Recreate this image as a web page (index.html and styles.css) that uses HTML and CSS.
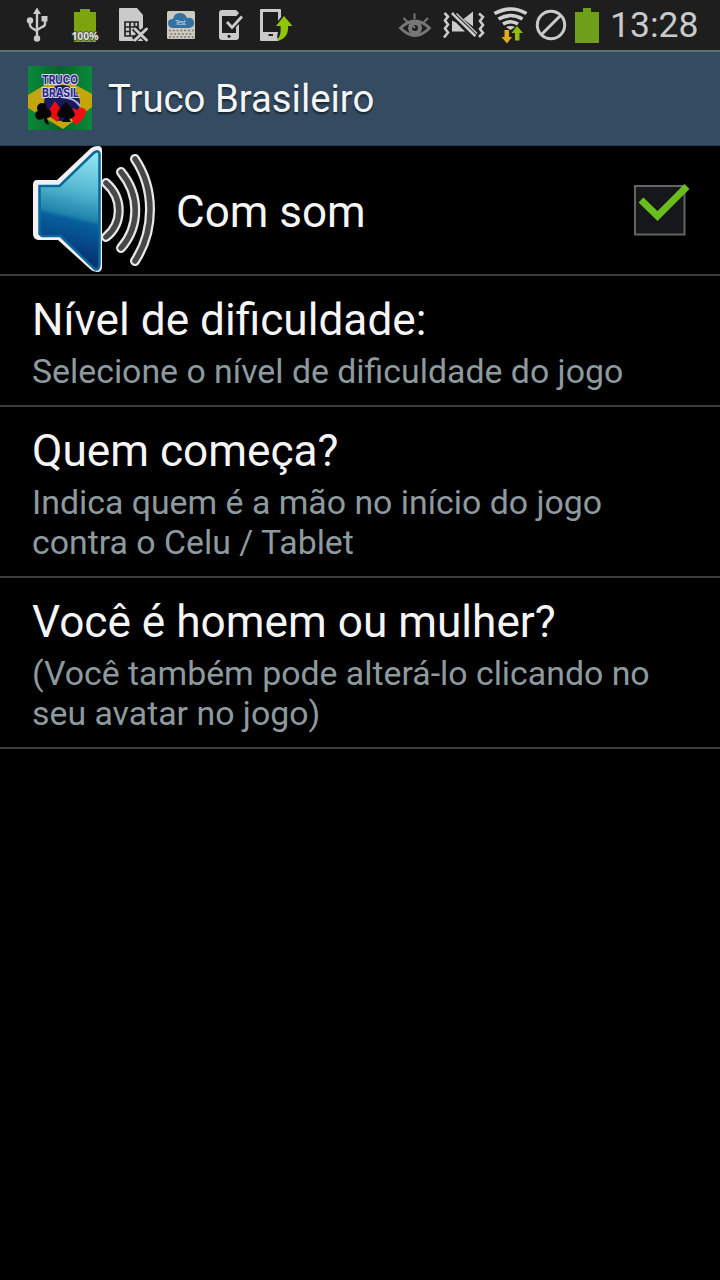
FILE: index.html
```html
<!DOCTYPE html>
<html lang="pt-BR">
<head>
<meta charset="utf-8">
<title>Truco Brasileiro</title>
<link rel="stylesheet" href="styles.css">
</head>
<body>
<div class="status">
  <div class="status-left">
    <svg class="slot" viewBox="13 0 48 50" fill="none" stroke="#cacaca" stroke-width="2.4">
      <path d="M37 38V13M30 20v5q0 2 2 3l5 3M45 18v6q0 2-3 3l-5 3"/>
      <path d="M37 7.500l4 6.500h-8z M41.500 16h6v5.500h-6z" fill="#cacaca" stroke="none"/>
      <circle cx="30" cy="20.500" r="3.200" fill="#cacaca" stroke="none"/><circle cx="37" cy="38.500" r="3.200" fill="#cacaca" stroke="none"/>
    </svg>
    <svg class="slot" viewBox="61 0 48 50">
      <path d="M80 9h10v3h6v30H74V12h6z" fill="#7ba40e"/>
      <text class="pct" x="71.500" y="40" textLength="27">100%</text>
    </svg>
    <svg class="slot" viewBox="109 0 48 50">
      <path d="M120 8h17l6 7v26h-23q-1 0-1-1V9q0-1 1-1z" fill="#cacaca"/>
      <path d="M125 22h13v14h-13zM125 27h5M125 31.500h5M130 22v14M134.500 22v5M130 27h8" fill="none" stroke="#262626" stroke-width="1.700"/>
      <path d="M134 28l13 12M147 28l-13 12" stroke="#1e1e1e" stroke-width="6"/>
      <path d="M135 29l11.500 11M146.500 29l-11.500 11" stroke="#cacaca" stroke-width="3" stroke-linecap="round"/>
    </svg>
    <svg class="slot" viewBox="157 0 48 50">
      <rect x="167" y="11" width="28" height="28" rx="1.500" fill="#cdcac2"/>
      <path d="M172 28q-4-1-4-5t5-4q1-6 7-6 5 0 7 5 6-1 7 4t-5 6z" fill="#34719f"/>
      <path d="M169 30.500h25M170.500 34h23M169 37h25" stroke="#74706a" stroke-width="1.600" stroke-dasharray="1.800 2"/>
      <text class="test" x="175" y="25" textLength="11">Test</text>
    </svg>
    <svg class="slot" viewBox="205 0 48 50">
      <path d="M222 10h14l3 3-2.500 3H222v17h14v-6l3-3v13q0 3-3 3h-14q-3 0-3-3V13q0-3 3-3z" fill="#cacaca"/>
      <circle cx="229" cy="36.300" r="1.500" fill="#1e1e1e"/>
      <path d="M227 22l5 5.500 10-11" fill="none" stroke="#cacaca" stroke-width="2.800"/>
    </svg>
    <svg class="slot" viewBox="253 0 48 50">
      <path fill-rule="evenodd" d="M261 9h19q1 0 1 1v7l-3 4v-9h-15v20h15l-1 5 2 4h-18q-1 0-1-1V10q0-1 1-1z" fill="#cacaca"/>
      <path d="M268.500 35h4.500" stroke="#222" stroke-width="2"/>
      <path d="M284 16l8.500 10H288q1 12-10.500 15-1-1 0-2 4-4 3-13h-4.500z" fill="#91c50b"/>
    </svg>
  </div>
  <div class="status-right">
    <svg class="slot" viewBox="391 0 48 50" fill="none" stroke="#777">
      <path d="M400.500 28q14.500-14 29 0-14.500 15-29 0z" stroke-width="2.800"/>
      <circle cx="415" cy="28" r="5" stroke-width="4"/><path d="M414.500 13.500v5.500M403.500 18l4 4M428 18l-4 4M415 28l-4-4" stroke-width="2"/>
    </svg>
    <svg class="slot" viewBox="439 0 48 50">
      <path d="M444.500 13l3.500 3.500-3 4 3 4-3 4 3 4-4 5M479 13.500l4 3.500-3 4 3 4-3 4 3 4-4 4" fill="none" stroke="#cacaca" stroke-width="2.600"/>
      <path d="M452 20.500v11h13l-9-9zM463.500 19l9.500-7.500v15z" fill="#cacaca"/>
      <path d="M452 13l23.500 23" stroke="#cacaca" stroke-width="3"/>
      <path d="M454.500 13l23 22" stroke="#1e1e1e" stroke-width="1.400"/>
      <path d="M456.500 13.500l20.500 20" stroke="#cacaca" stroke-width="1.500"/>
    </svg>
    <svg class="slot" viewBox="487 0 48 50">
      <g fill="none" stroke="#d0d0d0" stroke-width="3.700"><path d="M494.500 13.500q16.500-9 32 0M498.500 19q12-7 24 0M503 24q7.500-4.500 15 0"/></g>
      <path d="M506 27q4.500-2 9 0l-4.500 3z" fill="#d0d0d0"/>
      <path d="M504.500 30h4.500v7h3l-5 6.500-5.500-6.500h3z" fill="#e4ac14"/><path d="M517 26l6 7h-3.500v7.500H515v-7.500h-3.500z" fill="#91bd0c"/>
    </svg>
    <svg class="slot slot-no" viewBox="535 0 32 50" fill="none" stroke="#cacaca" stroke-width="3"><circle cx="551" cy="25" r="13.700"/><path d="M541.500 34.500l19-19"/></svg>
    <svg class="slot slot-battery" viewBox="567 0 40 50"><path d="M583 8h8v4h8v31h-24V12h8z" fill="#70a019"/></svg>
    <span class="clock">13:28</span>
  </div>
</div>
<header class="bar">
  <svg class="logo" viewBox="0 0 64 64">
    <defs><linearGradient id="green" x2="1"><stop stop-color="#098a39"/><stop offset=".5" stop-color="#07642c"/><stop offset="1" stop-color="#098a39"/></linearGradient></defs>
    <path d="M0 0h64v64H0z" fill="url(#green)"/>
    <path d="M0 29L20 17h24l20 11v13L35 63 0 42z" fill="#c4a60c"/>
    <circle cx="34" cy="37" r="18" fill="#19195e"/>
    <path d="M34 31q13 1 18 9" fill="none" stroke="#aab7cb" stroke-width="2"/>
    <path d="M27 35l8 11-6 10-10-9z" fill="#e80d0d"/>
    <path d="M48 59q-7-7-6-13 2-6 7-2 4-5 9 0 1 7-10 15z" fill="#f01010"/>
    <path d="M38 36q9 9 9 13-2 5-7 2l3 5h-9l3-5q-6 2-8-2 0-5 9-13z" fill="#050505"/>
    <g fill="#050505"><circle cx="14" cy="42" r="5"/><circle cx="12" cy="49" r="4.800"/><circle cx="19" cy="47.500" r="4.500"/><path d="M14 45h3l4 14-4-2z"/></g>
    <text class="logo-text" x="14" y="18" textLength="36" lengthAdjust="spacingAndGlyphs">TRUCO</text><text class="logo-text" x="14" y="30.500" textLength="37" lengthAdjust="spacingAndGlyphs">BRASIL</text>
  </svg>
  <h1 class="bar-title">Truco Brasileiro</h1>
</header>
<main>
  <section class="row row-sound">
    <svg class="speaker" viewBox="32 146 128 128">
      <defs>
        <linearGradient id="blue" x1=".5" y1="0" x2=".38" y2="1"><stop stop-color="#8ee2ee"/><stop offset=".3" stop-color="#56b9d1"/><stop offset=".53" stop-color="#2083ac"/><stop offset=".57" stop-color="#07609c"/><stop offset=".75" stop-color="#064687"/><stop offset="1" stop-color="#06245f"/></linearGradient>
      </defs>
      <path d="M37 180h20l34-32q3-2 7-2 4 0 4 4v117q0 5-5 5-4 0-7-3l-32-29H38q-5-1-5-6v-49q0-5 4-5z" fill="#f0f0f5"/>
      <path d="M39.500 186h20l34-33q5-4 6 1v110q0 7-5 5l-34-33H42l-2.500-2z" fill="url(#blue)" stroke="#08689a" stroke-width="2.500"/>
      <g fill="none" stroke-linecap="round">
        <g stroke="#e8e8e8" stroke-width="10"><path d="M106 183c17 15 17 40 0 54M121 172c19 23 19 54 0 76M135 159c20 30 20 71 0 102"/></g>
        <g stroke="#484848" stroke-width="5.500"><path d="M106 183c17 15 17 40 0 54M121 172c19 23 19 54 0 76M135 159c20 30 20 71 0 102"/></g>
      </g>
    </svg>
    <h2 class="title sound">Com som</h2>
    <svg class="check" viewBox="632 180 60 60"><path d="M635 186h49.500v48.500H635z" fill="#15171b" stroke="#646464" stroke-width="2"/><path d="M641 200l16.500 16L687 186.500" fill="none" stroke="#69bd1d" stroke-width="7"/></svg>
  </section>
  <section class="row"><h2 class="title">Nível de dificuldade:</h2><p class="sub">Selecione o nível de dificuldade do jogo</p></section>
  <section class="row"><h2 class="title">Quem começa?</h2><p class="sub">Indica quem é a mão no início do jogo<br>contra o Celu / Tablet</p></section>
  <section class="row"><h2 class="title">Você é homem ou mulher?</h2><p class="sub">(Você também pode alterá-lo clicando no<br>seu avatar no jogo)</p></section>
</main>
</body>
</html>
```
FILE: styles.css
```css
* { box-sizing: border-box; }
body { margin: 0; width: 720px; height: 1280px; overflow: hidden; background: #000; color: #f5f5f5; font-family: Roboto, "Noto Sans", sans-serif; }
h1, h2, p { margin: 0; font-weight: 400; white-space: nowrap; }
svg { display: block; flex: none; }
.status { display: flex; justify-content: space-between; height: 50px; padding: 0 22px 0 13px; background: #1e1e1e; }
.status-left, .status-right { display: flex; }
.slot { width: 48px; height: 50px; }
.slot-no { width: 32px; }
.slot-battery { width: 40px; }
.clock { width: 91px; padding-left: 3px; font-size: 35.5px; line-height: 50px; color: #cacaca; white-space: nowrap; }
.pct { font: 700 10.5px "Noto Sans", sans-serif; fill: #e4e4e4; stroke: #444; stroke-width: 1.5px; paint-order: stroke; }
.test { font: 7.5px "Noto Sans", sans-serif; fill: #b9d1e2; }
.bar { display: flex; align-items: center; gap: 16px; height: 96px; padding: 0 28px 2px; background: #344b61; border-top: 2px solid #5d7078; border-bottom: 1px solid #263c50; }
.logo { width: 64px; height: 64px; }
.logo-text { font: 700 12px Inter, sans-serif; fill: #292386; stroke: #d8d5ec; stroke-width: 2px; paint-order: stroke; }
.bar-title { padding-top: 3px; font-size: 38.3px; line-height: 48px; text-shadow: 0 2px 2px #17222d; }
.row { padding: 18px 32px 13px; border-bottom: 2px solid #3d3d3d; }
.row-sound { display: flex; align-items: center; height: 130px; padding: 0 28px 0 32px; }
.title { font-size: 44.2px; line-height: 52px; }
.sound { padding: 4px 0 0 16px; font-size: 44px; }
.sub { padding-top: 6px; font-size: 33.85px; line-height: 40px; color: #8d9a9e; }
.speaker { width: 128px; height: 128px; }
.check { width: 60px; height: 60px; margin-left: auto; }
```
